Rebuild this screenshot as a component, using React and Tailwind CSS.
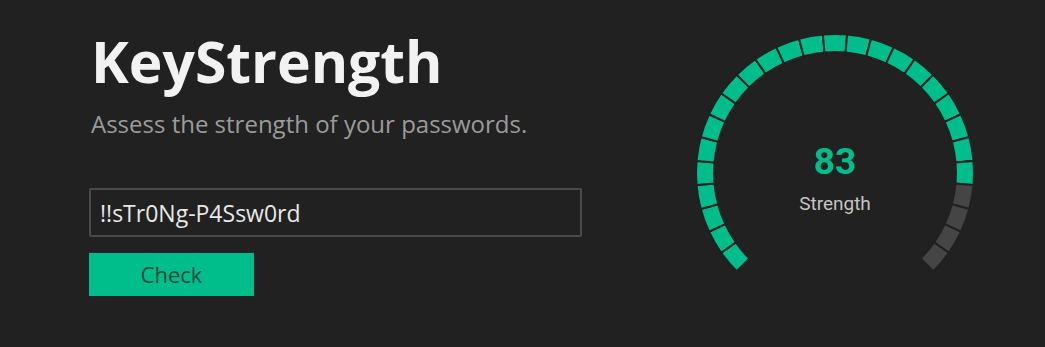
import { useState } from "react";

// Gauge geometry
const SEGMENTS = 27;
const CX = 145;
const CY = 145;
const R_OUT = 139;
const R_IN = 121;

function polar(r, deg) {
  const a = (deg * Math.PI) / 180;
  return [CX + r * Math.cos(a), CY + r * Math.sin(a)];
}

function segmentPath(i) {
  const a0 = 135 + i * 10;
  const a1 = a0 + 10;
  const [x0, y0] = polar(R_OUT, a0);
  const [x1, y1] = polar(R_OUT, a1);
  const [x2, y2] = polar(R_IN, a1);
  const [x3, y3] = polar(R_IN, a0);
  return `M${x0} ${y0} A${R_OUT} ${R_OUT} 0 0 1 ${x1} ${y1} L${x2} ${y2} A${R_IN} ${R_IN} 0 0 0 ${x3} ${y3} Z`;
}

function Gauge({ value }) {
  const lit = Math.ceil((value / 100) * SEGMENTS);
  return (
    <div className="relative w-[290px] h-[290px]">
      <svg width="290" height="290" viewBox="0 0 290 290">
        {Array.from({ length: SEGMENTS }).map((_, i) => (
          <path
            key={i}
            d={segmentPath(i)}
            fill={i < lit ? "#00be8b" : "#454545"}
            stroke="#212121"
            strokeWidth="2"
          />
        ))}
      </svg>
      <div className="absolute inset-0 flex flex-col items-center pt-[115px] font-['Roboto',sans-serif]">
        <span className="text-[37px] font-bold leading-none text-[#00be8b]">{value}</span>
        <span className="mt-[14px] text-[19px] leading-none text-[#c4c4c4]">Strength</span>
      </div>
    </div>
  );
}

function App() {
  const [password, setPassword] = useState("!!sTr0Ng-P4Ssw0rd");

  return (
    <div className="min-h-screen h-[347px] bg-[#212121] flex font-['Open_Sans',sans-serif]">
      <div className="w-[582px] pl-[89px] pt-[33px] flex flex-col">
        <h1 className="text-[57px] font-bold leading-none text-[#f2f2f2] ml-[2px]">KeyStrength</h1>
        <p className="mt-[22px] text-[24px] leading-none text-[#9b9b9b] ml-[2px]">Assess the strength of your passwords.</p>
        <input
          value={password}
          onChange={(e) => setPassword(e.target.value)}
          className="mt-[52px] h-[49px] w-[493px] rounded-[2px] border-2 border-[#4a4a4a] bg-transparent px-[9px] text-[23px] text-[#e8e8e8] outline-none"
        />
        <button className="mt-[16px] h-[43px] w-[165px] bg-[#00be8b] text-[22px] text-[#17473a]">
          Check
        </button>
      </div>
      <div className="ml-[108px] pt-[28px]">
        <Gauge value={83} />
      </div>
    </div>
  );
}

export default App
